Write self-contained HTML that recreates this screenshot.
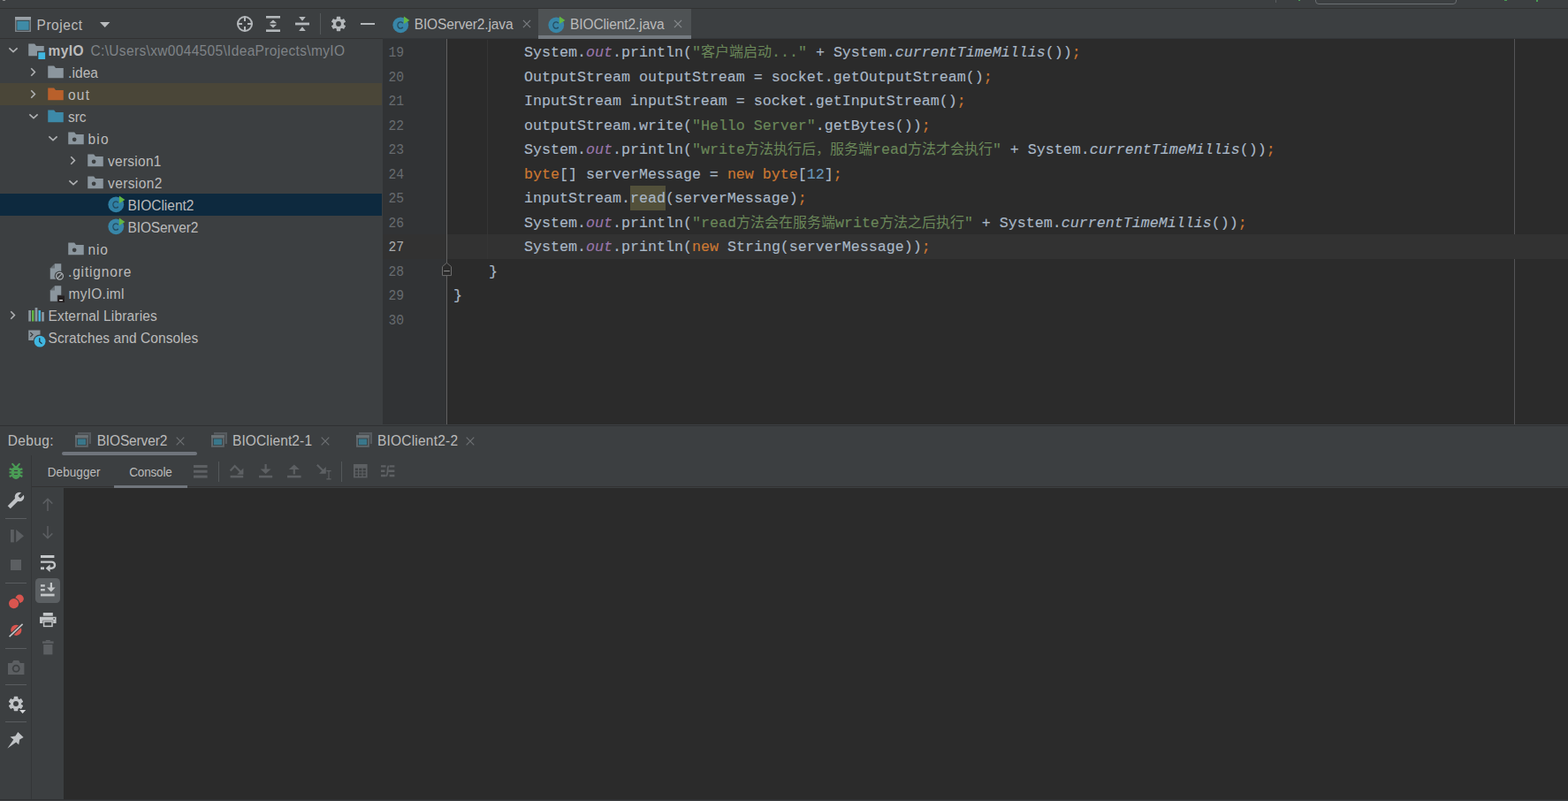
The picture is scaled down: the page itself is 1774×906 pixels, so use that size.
<!DOCTYPE html>
<html lang="en"><head><meta charset="utf-8"><title>IDEA</title><style>
*{box-sizing:border-box;margin:0;padding:0}
html,body{width:1774px;height:906px;overflow:hidden;background:#3c3f41}
body{position:relative;font-family:"Liberation Sans",sans-serif;font-size:15px;color:#bbbbbb}
.a{position:absolute}
.t{position:absolute;white-space:pre;line-height:20px;height:20px;transform:scaleY(1.07)}
.ln{position:absolute;left:432.2px;width:25px;transform:scaleX(0.88);transform-origin:100% 50%;text-align:right;font-family:"Liberation Mono",monospace;font-size:16.667px;color:#676b6f;height:27.5px;line-height:27.5px;white-space:pre}
.cl{position:absolute;left:513px;font-family:"Liberation Mono",monospace;font-size:16.667px;color:#a9b7c6;height:27.5px;line-height:27.5px;white-space:pre;-webkit-text-stroke:0.15px}
.k{color:#cc7832}.s{color:#6a8759}.n{color:#6897bb}.f{color:#9876aa;font-style:italic}.i{font-style:italic}
.cj{display:inline-block;vertical-align:baseline;font-family:"Liberation Mono","Noto Sans CJK SC",monospace;font-size:16px;letter-spacing:0;white-space:nowrap;color:#6a8759;-webkit-text-stroke:0}
svg{position:absolute;overflow:visible}
</style></head><body>
<div class="a" style="left:0px;top:0px;width:1774px;height:10px;background:#3c3f41;"></div>
<div class="a" style="left:0px;top:9px;width:1774px;height:1px;background:#323232;"></div>
<div class="a" style="left:1488px;top:-8px;width:160px;height:12.5px;border:1px solid #6b6f72;border-radius:4px"></div>
<div class="a" style="left:1443px;top:0px;width:1px;height:3px;background:#5a5d5f;"></div>
<div class="a" style="left:1469px;top:0px;width:2px;height:1px;background:#499c54;"></div>
<div class="a" style="left:1702px;top:0px;width:3px;height:1px;background:#499c54;"></div>
<div class="a" style="left:1738px;top:0px;width:2px;height:2px;background:#499c54;"></div>
<div class="a" style="left:3px;top:0px;width:3px;height:1px;background:#8a8a8a;"></div>
<div class="a" style="left:0px;top:10px;width:433px;height:470px;background:#3c3f41;"></div>
<div class="a" style="left:0px;top:43px;width:433px;height:1px;background:#323232;"></div>
<div class="a" style="left:0px;top:94px;width:432px;height:25px;background:#4a4638;"></div>
<div class="a" style="left:0px;top:219px;width:432px;height:25px;background:#0d293e;"></div>
<div class="t" style="left:41.50px;top:18.73px;transform-origin:0 14.57px;font-size:15.5px;color:#bbbbbb;letter-spacing:0.542px;font-weight:normal;">Project</div>
<div class="t" style="left:54.50px;top:48.03px;transform-origin:0 14.57px;font-size:15.5px;color:#bbbbbb;letter-spacing:0.411px;font-weight:bold;">myIO</div>
<div class="t" style="left:77.00px;top:73.03px;transform-origin:0 14.57px;font-size:15.5px;color:#bbbbbb;letter-spacing:0.094px;font-weight:normal;">.idea</div>
<div class="t" style="left:77.00px;top:98.03px;transform-origin:0 14.57px;font-size:15.5px;color:#bbbbbb;letter-spacing:1.219px;font-weight:normal;">out</div>
<div class="t" style="left:77.00px;top:123.03px;transform-origin:0 14.57px;font-size:15.5px;color:#bbbbbb;letter-spacing:-0.036px;font-weight:normal;">src</div>
<div class="t" style="left:99.50px;top:148.03px;transform-origin:0 14.57px;font-size:15.5px;color:#bbbbbb;letter-spacing:1.156px;font-weight:normal;">bio</div>
<div class="t" style="left:122.00px;top:173.03px;transform-origin:0 14.57px;font-size:15.5px;color:#bbbbbb;letter-spacing:0.272px;font-weight:normal;">version1</div>
<div class="t" style="left:122.00px;top:198.03px;transform-origin:0 14.57px;font-size:15.5px;color:#bbbbbb;letter-spacing:0.387px;font-weight:normal;">version2</div>
<div class="t" style="left:144.50px;top:223.03px;transform-origin:0 14.57px;font-size:15.5px;color:#bbbbbb;letter-spacing:0.005px;font-weight:normal;">BIOClient2</div>
<div class="t" style="left:144.50px;top:248.03px;transform-origin:0 14.57px;font-size:15.5px;color:#bbbbbb;letter-spacing:-0.132px;font-weight:normal;">BIOServer2</div>
<div class="t" style="left:99.50px;top:273.03px;transform-origin:0 14.57px;font-size:15.5px;color:#bbbbbb;letter-spacing:0.806px;font-weight:normal;">nio</div>
<div class="t" style="left:77.00px;top:298.03px;transform-origin:0 14.57px;font-size:15.5px;color:#bbbbbb;letter-spacing:0.837px;font-weight:normal;">.gitignore</div>
<div class="t" style="left:77.50px;top:323.03px;transform-origin:0 14.57px;font-size:15.5px;color:#bbbbbb;letter-spacing:0.266px;font-weight:normal;">myIO.iml</div>
<div class="t" style="left:54.50px;top:348.03px;transform-origin:0 14.57px;font-size:15.5px;color:#bbbbbb;letter-spacing:0.158px;font-weight:normal;">External Libraries</div>
<div class="t" style="left:54.50px;top:373.03px;transform-origin:0 14.57px;font-size:15.5px;color:#bbbbbb;letter-spacing:0.085px;font-weight:normal;">Scratches and Consoles</div>
<div class="t" style="left:102.50px;top:48.03px;transform-origin:0 14.57px;font-size:15.5px;color:#7f8387;letter-spacing:0.338px;font-weight:normal;">C:\Users\xw0044505\IdeaProjects\myIO</div>
<svg style="left:5.3px;top:46.5px" width="20" height="20" viewBox="0 0 16 16" ><polyline points="4.3,5.9 8,9.3 11.7,5.9" fill="none" stroke="#afb1b3" stroke-width="1.3"/></svg>
<svg style="left:30.75px;top:46.5px" width="20" height="20" viewBox="0 0 16 16" ><path d="M1,13 H15 V4 H8 L6.5,2 H1 Z" fill="#8b969e"/><rect x="8.8" y="8.6" width="8" height="8" fill="#3c3f41"/><rect x="9.9" y="9.8" width="6.2" height="6.2" fill="#40b6e0"/></svg>
<svg style="left:27.8px;top:71.5px" width="20" height="20" viewBox="0 0 16 16" ><polyline points="5.8,4.2 9.1,7.6 5.8,11" fill="none" stroke="#afb1b3" stroke-width="1.3"/></svg>
<svg style="left:53.25px;top:71.5px" width="20" height="20" viewBox="0 0 16 16" ><path d="M1,13 H15 V4 H8 L6.5,2 H1 Z" fill="#8b969e"/></svg>
<svg style="left:27.8px;top:96.5px" width="20" height="20" viewBox="0 0 16 16" ><polyline points="5.8,4.2 9.1,7.6 5.8,11" fill="none" stroke="#afb1b3" stroke-width="1.3"/></svg>
<svg style="left:53.25px;top:96.5px" width="20" height="20" viewBox="0 0 16 16" ><path d="M1,13 H15 V4 H8 L6.5,2 H1 Z" fill="#b9602b"/></svg>
<svg style="left:27.8px;top:121.5px" width="20" height="20" viewBox="0 0 16 16" ><polyline points="4.3,5.9 8,9.3 11.7,5.9" fill="none" stroke="#afb1b3" stroke-width="1.3"/></svg>
<svg style="left:53.25px;top:121.5px" width="20" height="20" viewBox="0 0 16 16" ><path d="M1,13 H15 V4 H8 L6.5,2 H1 Z" fill="#3d8aa9"/></svg>
<svg style="left:50.3px;top:146.5px" width="20" height="20" viewBox="0 0 16 16" ><polyline points="4.3,5.9 8,9.3 11.7,5.9" fill="none" stroke="#afb1b3" stroke-width="1.3"/></svg>
<svg style="left:75.75px;top:146.5px" width="20" height="20" viewBox="0 0 16 16" ><path d="M1,13 H15 V4 H8 L6.5,2 H1 Z" fill="#8b969e"/><circle cx="6.5" cy="8.6" r="1.9" fill="#3c3f41"/></svg>
<svg style="left:72.8px;top:171.5px" width="20" height="20" viewBox="0 0 16 16" ><polyline points="5.8,4.2 9.1,7.6 5.8,11" fill="none" stroke="#afb1b3" stroke-width="1.3"/></svg>
<svg style="left:98.25px;top:171.5px" width="20" height="20" viewBox="0 0 16 16" ><path d="M1,13 H15 V4 H8 L6.5,2 H1 Z" fill="#8b969e"/><circle cx="6.5" cy="8.6" r="1.9" fill="#3c3f41"/></svg>
<svg style="left:72.8px;top:196.5px" width="20" height="20" viewBox="0 0 16 16" ><polyline points="4.3,5.9 8,9.3 11.7,5.9" fill="none" stroke="#afb1b3" stroke-width="1.3"/></svg>
<svg style="left:98.25px;top:196.5px" width="20" height="20" viewBox="0 0 16 16" ><path d="M1,13 H15 V4 H8 L6.5,2 H1 Z" fill="#8b969e"/><circle cx="6.5" cy="8.6" r="1.9" fill="#3c3f41"/></svg>
<svg style="left:120.75px;top:221.1px" width="20" height="20" viewBox="0 0 16 16" ><circle cx="8.2" cy="8.2" r="7.1" fill="#3080a4"/><path d="M10.2,10.2 A2.6,2.9 0 1 1 10.2,6.6" fill="none" stroke="#1f3d4d" stroke-width="1.1" stroke-opacity=".8"/><path d="M11.1,0.4 L16.3,4 L11.1,7.1 Z" fill="#62b543"/></svg>
<svg style="left:120.75px;top:246.1px" width="20" height="20" viewBox="0 0 16 16" ><circle cx="8.2" cy="8.2" r="7.1" fill="#3886a8"/><path d="M10.2,10.2 A2.6,2.9 0 1 1 10.2,6.6" fill="none" stroke="#1f3d4d" stroke-width="1.1" stroke-opacity=".8"/><path d="M11.1,0.4 L16.3,4 L11.1,7.1 Z" fill="#62b543"/></svg>
<svg style="left:75.75px;top:271.5px" width="20" height="20" viewBox="0 0 16 16" ><path d="M1,13 H15 V4 H8 L6.5,2 H1 Z" fill="#8b969e"/><circle cx="6.5" cy="8.6" r="1.9" fill="#3c3f41"/></svg>
<svg style="left:53.25px;top:296.5px" width="20" height="20" viewBox="0 0 16 16" ><path d="M3,15 V5.2 L7.2,1 H13 V15 Z" fill="#8b969e"/><path d="M3,5.2 L7.2,1 V5.2 Z" fill="#3c3f41" fill-opacity=".45"/><circle cx="11.6" cy="12.2" r="4.6" fill="#3c3f41"/><circle cx="11.6" cy="12.2" r="3.1" fill="none" stroke="#aeb3b7" stroke-width="1"/><line x1="9.5" y1="14.3" x2="13.7" y2="10.1" stroke="#aeb3b7" stroke-width="1"/></svg>
<svg style="left:53.25px;top:321.5px" width="20" height="20" viewBox="0 0 16 16" ><path d="M3,15 V5.2 L7.2,1 H13 V15 Z" fill="#8b969e"/><path d="M3,5.2 L7.2,1 V5.2 Z" fill="#3c3f41" fill-opacity=".45"/><rect x="9.4" y="9.4" width="7" height="7" fill="#3c3f41"/><rect x="10" y="10" width="6" height="6" fill="#231f20"/><rect x="11.3" y="13.6" width="3" height="1" fill="#e8e8e8"/></svg>
<svg style="left:5.3px;top:346.5px" width="20" height="20" viewBox="0 0 16 16" ><polyline points="5.8,4.2 9.1,7.6 5.8,11" fill="none" stroke="#afb1b3" stroke-width="1.3"/></svg>
<svg style="left:30.75px;top:345.5px" width="20" height="20" viewBox="0 0 16 16" ><rect x="1" y="4" width="2.2" height="10" fill="#8b969e"/><rect x="4" y="4" width="2" height="10" fill="#62b543"/><rect x="6.9" y="1.6" width="2.2" height="12.4" fill="#8b969e"/><rect x="10" y="4" width="2" height="10" fill="#40b6e0"/><rect x="12.9" y="5.6" width="2.2" height="8.4" fill="#8b969e"/></svg>
<svg style="left:30.75px;top:371.5px" width="20" height="20" viewBox="0 0 16 16" ><rect x="1" y="1.2" width="10.6" height="9.2" fill="#8b969e"/><polyline points="2.6,3.2 4.8,5.2 2.6,7.2" fill="none" stroke="#3c3f41" stroke-width="1"/><circle cx="11.3" cy="11.3" r="6.1" fill="#3c3f41"/><circle cx="11.3" cy="11.3" r="5.1" fill="#40b6e0"/><polyline points="11,8.2 11,11.6 13.2,13.4" fill="none" stroke="#1f3a4a" stroke-width="1.1"/></svg>
<svg style="left:17px;top:19px" width="18" height="17" viewBox="0 0 18 17" ><rect x="0" y="0" width="18" height="17" fill="#7d858b"/><rect x="0" y="0" width="18" height="3.2" fill="#9aa1a7"/><rect x="1.6" y="4" width="14.8" height="11.6" fill="#33373a"/><rect x="2.3" y="4.7" width="13.4" height="10.2" fill="#3f8ba7"/></svg>
<svg style="left:112.5px;top:25.4px" width="11.4" height="6" viewBox="0 0 11.4 6" ><path d="M0,0 H11.4 L5.7,6 Z" fill="#b9bcbe"/></svg>
<svg style="left:267px;top:17px" width="20" height="20" viewBox="0 0 20 20" ><circle cx="10" cy="10" r="8" fill="none" stroke="#b4b8bb" stroke-width="2"/><path d="M10,1.5 V7 M10,13 V18.5 M1.5,10 H7 M13,10 H18.5" stroke="#b4b8bb" stroke-width="2" fill="none"/></svg>
<svg style="left:301.2px;top:18px" width="16" height="18" viewBox="0 0 16 18" ><rect x="0" y="0" width="16" height="2.6" fill="#b4b8bb"/><rect x="0" y="15.4" width="16" height="2.6" fill="#b4b8bb"/><path d="M8,4.4 L12.2,8.2 H3.8 Z M8,13.6 L12.2,9.8 H3.8 Z" fill="#b4b8bb"/></svg>
<svg style="left:334.3px;top:18px" width="16" height="18" viewBox="0 0 16 18" ><rect x="0" y="7.6" width="16" height="2.8" fill="#b4b8bb"/><path d="M8,5.8 L11.8,1 H4.2 Z M8,12.2 L11.8,17 H4.2 Z" fill="#b4b8bb"/></svg>
<div class="a" style="left:362px;top:15px;width:1px;height:24px;background:#54585a;"></div>
<svg style="left:373px;top:17px" width="20" height="20" viewBox="0 0 20 20" ><g transform="translate(10,10)" fill="#b4b8bb"><rect x="-2.2" y="-8.2" width="4.4" height="8.2" rx="0.6" transform="rotate(0)"/><rect x="-2.2" y="-8.2" width="4.4" height="8.2" rx="0.6" transform="rotate(60)"/><rect x="-2.2" y="-8.2" width="4.4" height="8.2" rx="0.6" transform="rotate(120)"/><rect x="-2.2" y="-8.2" width="4.4" height="8.2" rx="0.6" transform="rotate(180)"/><rect x="-2.2" y="-8.2" width="4.4" height="8.2" rx="0.6" transform="rotate(240)"/><rect x="-2.2" y="-8.2" width="4.4" height="8.2" rx="0.6" transform="rotate(300)"/><circle r="6.1"/></g><circle cx="10" cy="10" r="2.9" fill="#3c3f41"/></svg>
<div class="a" style="left:408.4px;top:25.6px;width:15.2px;height:2.8px;background:#b4b8bb;"></div>
<div class="a" style="left:433px;top:10px;width:1341px;height:34px;background:#3c3f41;"></div>
<div class="a" style="left:433px;top:43px;width:1341px;height:1px;background:#34373a;"></div>
<div class="a" style="left:609px;top:10px;width:173px;height:34px;background:#4e5254;"></div>
<div class="a" style="left:609px;top:40px;width:173px;height:4px;background:#747a80;"></div>
<div class="t" style="left:468.70px;top:18.03px;transform-origin:0 14.57px;font-size:15.5px;color:#bbbbbb;letter-spacing:-0.130px;font-weight:normal;">BIOServer2.java</div>
<div class="t" style="left:644.90px;top:18.03px;transform-origin:0 14.57px;font-size:15.5px;color:#bbbbbb;letter-spacing:-0.072px;font-weight:normal;">BIOClient2.java</div>
<svg style="left:443px;top:17.6px" width="20" height="20" viewBox="0 0 16 16" ><circle cx="8.2" cy="8.2" r="7.1" fill="#3886a8"/><path d="M10.2,10.2 A2.6,2.9 0 1 1 10.2,6.6" fill="none" stroke="#1f3d4d" stroke-width="1.1" stroke-opacity=".8"/><path d="M11.1,0.4 L16.3,4 L11.1,7.1 Z" fill="#62b543"/></svg>
<svg style="left:619.3px;top:17.6px" width="20" height="20" viewBox="0 0 16 16" ><circle cx="8.2" cy="8.2" r="7.1" fill="#3886a8"/><path d="M10.2,10.2 A2.6,2.9 0 1 1 10.2,6.6" fill="none" stroke="#1f3d4d" stroke-width="1.1" stroke-opacity=".8"/><path d="M11.1,0.4 L16.3,4 L11.1,7.1 Z" fill="#62b543"/></svg>
<svg style="left:590px;top:20.9px" width="12" height="12" viewBox="0 0 12 12" ><path d="M1.9000000000000004,1.9000000000000004 L10.1,10.1 M10.1,1.9000000000000004 L1.9000000000000004,10.1" stroke="#7a7d80" stroke-width="1.2" fill="none"/></svg>
<svg style="left:760.8px;top:20.9px" width="12" height="12" viewBox="0 0 12 12" ><path d="M1.9000000000000004,1.9000000000000004 L10.1,10.1 M10.1,1.9000000000000004 L1.9000000000000004,10.1" stroke="#868a8d" stroke-width="1.2" fill="none"/></svg>
<div class="a" style="left:433px;top:44px;width:73px;height:436px;background:#313335;"></div>
<div class="a" style="left:506px;top:44px;width:1268px;height:436px;background:#2b2b2b;"></div>
<div class="a" style="left:1713px;top:44px;width:1px;height:436px;background:#555557;"></div>
<div class="a" style="left:433px;top:265px;width:1341px;height:27.5px;background:#323232;"></div>
<div class="a" style="left:713px;top:210px;width:40px;height:27.5px;background:#52503a;"></div>
<div class="ln" style="top:46.05px;color:#676b6f">19</div>
<div class="cl" style="top:46.05px">        System.<span class="f">out</span>.println(<span class="s">"</span><span class="cj" style="width:80px">客户端启动</span><span class="s">..."</span> + System.<span class="i">currentTimeMillis</span>())<span class="k">;</span></div>
<div class="ln" style="top:73.55px;color:#676b6f">20</div>
<div class="cl" style="top:73.55px">        OutputStream outputStream = socket.getOutputStream()<span class="k">;</span></div>
<div class="ln" style="top:101.05px;color:#676b6f">21</div>
<div class="cl" style="top:101.05px">        InputStream inputStream = socket.getInputStream()<span class="k">;</span></div>
<div class="ln" style="top:128.55px;color:#676b6f">22</div>
<div class="cl" style="top:128.55px">        outputStream.write(<span class="s">"Hello Server"</span>.getBytes())<span class="k">;</span></div>
<div class="ln" style="top:156.05px;color:#676b6f">23</div>
<div class="cl" style="top:156.05px">        System.<span class="f">out</span>.println(<span class="s">"write</span><span class="cj" style="width:144px">方法执行后，服务端</span><span class="s">read</span><span class="cj" style="width:96px">方法才会执行</span><span class="s">"</span> + System.<span class="i">currentTimeMillis</span>())<span class="k">;</span></div>
<div class="ln" style="top:183.55px;color:#676b6f">24</div>
<div class="cl" style="top:183.55px">        <span class="k">byte</span>[] serverMessage = <span class="k">new byte</span>[<span class="n">12</span>]<span class="k">;</span></div>
<div class="ln" style="top:211.05px;color:#676b6f">25</div>
<div class="cl" style="top:211.05px">        inputStream.read(serverMessage)<span class="k">;</span></div>
<div class="ln" style="top:238.55px;color:#676b6f">26</div>
<div class="cl" style="top:238.55px">        System.<span class="f">out</span>.println(<span class="s">"read</span><span class="cj" style="width:112px">方法会在服务端</span><span class="s">write</span><span class="cj" style="width:96px">方法之后执行</span><span class="s">"</span> + System.<span class="i">currentTimeMillis</span>())<span class="k">;</span></div>
<div class="ln" style="top:266.05px;color:#a9abad">27</div>
<div class="cl" style="top:266.05px">        System.<span class="f">out</span>.println(<span class="k">new</span> String(serverMessage))<span class="k">;</span></div>
<div class="ln" style="top:293.55px;color:#676b6f">28</div>
<div class="cl" style="top:293.55px">    }</div>
<div class="ln" style="top:321.05px;color:#676b6f">29</div>
<div class="cl" style="top:321.05px">}</div>
<div class="ln" style="top:348.55px;color:#676b6f">30</div>
<div class="a" style="left:551px;top:45px;width:1px;height:247.5px;background:#353535;"></div>
<div class="a" style="left:505px;top:44px;width:1px;height:436px;background:#606060;"></div>
<svg style="left:499px;top:296px" width="13" height="17" viewBox="0 0 13 17" ><path d="M6.5,1.3 L11.5,5.6 V15.6 H1.5 V5.6 Z" fill="#2b2b2b" stroke="#6e6e6e" stroke-width="1"/><rect x="3.2" y="10" width="6.6" height="1.1" fill="#8a8a8a"/></svg>
<div class="a" style="left:0px;top:480px;width:1774px;height:426px;background:#3c3f41;"></div>
<div class="a" style="left:0px;top:481px;width:1774px;height:1px;background:#2f3133;"></div>
<div class="a" style="left:72px;top:552px;width:1702px;height:352px;background:#2b2b2b;"></div>
<div class="a" style="left:35px;top:515px;width:1px;height:389px;background:#343638;"></div>
<div class="a" style="left:36px;top:550px;width:1738px;height:1px;background:#323232;"></div>
<div class="a" style="left:0px;top:904px;width:1774px;height:1px;background:#2f3133;"></div>
<div class="a" style="left:0px;top:905px;width:1774px;height:1px;background:#3c3f41;"></div>
<div class="t" style="left:8.80px;top:489.23px;transform-origin:0 14.57px;font-size:15.5px;color:#bbbbbb;letter-spacing:0.343px;font-weight:normal;">Debug:</div>
<div class="t" style="left:109.70px;top:489.23px;transform-origin:0 14.57px;font-size:15.5px;color:#bbbbbb;letter-spacing:-0.154px;font-weight:normal;">BIOServer2</div>
<div class="t" style="left:263.00px;top:489.23px;transform-origin:0 14.57px;font-size:15.5px;color:#bbbbbb;letter-spacing:0.115px;font-weight:normal;">BIOClient2-1</div>
<div class="t" style="left:427.00px;top:489.23px;transform-origin:0 14.57px;font-size:15.5px;color:#bbbbbb;letter-spacing:0.206px;font-weight:normal;">BIOClient2-2</div>
<div class="a" style="left:69.6px;top:511.3px;width:153.8px;height:3.8px;background:#70757c;border-radius:2px"></div>
<div class="t" style="left:53.80px;top:524.92px;transform-origin:0 13.88px;font-size:13.5px;color:#bbbbbb;letter-spacing:0.072px;font-weight:normal;">Debugger</div>
<div class="t" style="left:146.30px;top:524.92px;transform-origin:0 13.88px;font-size:13.5px;color:#bbbbbb;letter-spacing:-0.172px;font-weight:normal;">Console</div>
<div class="a" style="left:129px;top:548.8px;width:83px;height:3px;background:#70757c;"></div>
<svg style="left:85.2px;top:488.8px" width="18" height="17" viewBox="0 0 18 17" ><path d="M3,0 H18 V13 H15.6 V2.6 H3 Z" fill="#565b5f"/><rect x="0" y="3.2" width="14.8" height="13.6" fill="#5f6569"/><rect x="0" y="3.2" width="14.8" height="2.6" fill="#6d7377"/><rect x="2" y="6.8" width="10.8" height="8" fill="#33373a"/><rect x="2.7" y="7.4" width="9.4" height="6.8" fill="#39778b"/></svg>
<svg style="left:238.8px;top:488.8px" width="18" height="17" viewBox="0 0 18 17" ><path d="M3,0 H18 V13 H15.6 V2.6 H3 Z" fill="#565b5f"/><rect x="0" y="3.2" width="14.8" height="13.6" fill="#5f6569"/><rect x="0" y="3.2" width="14.8" height="2.6" fill="#6d7377"/><rect x="2" y="6.8" width="10.8" height="8" fill="#33373a"/><rect x="2.7" y="7.4" width="9.4" height="6.8" fill="#39778b"/></svg>
<svg style="left:402.8px;top:488.8px" width="18" height="17" viewBox="0 0 18 17" ><path d="M3,0 H18 V13 H15.6 V2.6 H3 Z" fill="#565b5f"/><rect x="0" y="3.2" width="14.8" height="13.6" fill="#5f6569"/><rect x="0" y="3.2" width="14.8" height="2.6" fill="#6d7377"/><rect x="2" y="6.8" width="10.8" height="8" fill="#33373a"/><rect x="2.7" y="7.4" width="9.4" height="6.8" fill="#39778b"/></svg>
<svg style="left:198px;top:492.9px" width="12" height="12" viewBox="0 0 12 12" ><path d="M1.7000000000000002,1.7000000000000002 L10.3,10.3 M10.3,1.7000000000000002 L1.7000000000000002,10.3" stroke="#6e7174" stroke-width="1.2" fill="none"/></svg>
<svg style="left:362px;top:492.9px" width="12" height="12" viewBox="0 0 12 12" ><path d="M1.7000000000000002,1.7000000000000002 L10.3,10.3 M10.3,1.7000000000000002 L1.7000000000000002,10.3" stroke="#6e7174" stroke-width="1.2" fill="none"/></svg>
<svg style="left:526px;top:492.9px" width="12" height="12" viewBox="0 0 12 12" ><path d="M1.7000000000000002,1.7000000000000002 L10.3,10.3 M10.3,1.7000000000000002 L1.7000000000000002,10.3" stroke="#6e7174" stroke-width="1.2" fill="none"/></svg>
<svg style="left:10px;top:524px" width="16" height="18" viewBox="0 0 16 18" ><path d="M4.2,0.9 L7.6,4.8 M11.8,0.9 L8.4,4.8" stroke="#4a9c55" stroke-width="2.1" stroke-linecap="round" fill="none"/><path d="M0.6,6.3 L4,7.2 H12 L15.4,6.3 M0.5,10.4 H15.5 M0.6,14.8 L4,13.7 H12 L15.4,14.8" stroke="#4a9c55" stroke-width="2.4" fill="none"/><path d="M8,4 C11.6,4 13.2,6.6 13.2,10.6 C13.2,15 11.2,17.9 8,17.9 C4.8,17.9 2.8,15 2.8,10.6 C2.8,6.6 4.4,4 8,4 Z" fill="#4a9c55"/><rect x="6" y="7.9" width="4" height="1.2" fill="#3c3f41"/><rect x="6" y="11.7" width="4" height="1.2" fill="#3c3f41"/></svg>
<svg style="left:9.7px;top:549.9px" width="24" height="24" viewBox="0 0 24 24" ><g transform="translate(12,12) rotate(45)"><circle cx="0" cy="0" r="5.3" fill="#c0c3c6"/><rect x="-2.2" y="2" width="4.4" height="14.6" fill="#c0c3c6"/><rect x="-1.9" y="-6.5" width="3.8" height="6.9" fill="#3c3f41"/></g></svg>
<div class="a" style="left:6px;top:586.2px;width:24px;height:1px;background:#5a5d60;"></div>
<div class="a" style="left:6px;top:659px;width:24px;height:1px;background:#5a5d60;"></div>
<div class="a" style="left:6px;top:733px;width:24px;height:1px;background:#5a5d60;"></div>
<div class="a" style="left:6px;top:774.2px;width:24px;height:1px;background:#5a5d60;"></div>
<div class="a" style="left:6px;top:816.4px;width:24px;height:1px;background:#5a5d60;"></div>
<svg style="left:11.6px;top:599px" width="15" height="14.4" viewBox="0 0 15 14.4" ><rect x="0" y="0" width="3.8" height="14.4" fill="#5c5f62"/><path d="M6.2,0 L15,7.2 L6.2,14.4 Z" fill="#5c5f62"/></svg>
<div class="a" style="left:12px;top:632.8px;width:12.4px;height:12.4px;background:#5c5f62;"></div>
<svg style="left:9px;top:671px" width="20" height="19" viewBox="0 0 20 19" ><circle cx="13.1" cy="6.2" r="4.7" fill="#d9554f"/><circle cx="6.6" cy="11.6" r="6.6" fill="#3c3f41"/><circle cx="6.6" cy="11.6" r="5.6" fill="#d9554f"/></svg>
<svg style="left:9px;top:703px" width="20" height="20" viewBox="0 0 20 20" ><circle cx="9.3" cy="9.8" r="6.1" fill="#d9554f"/><line x1="1.2" y1="17.6" x2="17" y2="2.4" stroke="#3c3f41" stroke-width="4"/><line x1="1.6" y1="17.2" x2="16.6" y2="2.8" stroke="#c4c7c9" stroke-width="1.6"/></svg>
<svg style="left:8.8px;top:746.8px" width="18.4" height="16" viewBox="0 0 18.4 16" ><path d="M0,3 H4.6 L6.2,0 H12.2 L13.8,3 H18.4 V16 H0 Z" fill="#5c5f62"/><circle cx="9.2" cy="9.2" r="4.4" fill="#3c3f41"/><circle cx="9.2" cy="9.2" r="2.6" fill="#5c5f62"/></svg>
<svg style="left:8.100000000000001px;top:785.9px" width="20" height="20" viewBox="0 0 20 20" ><g transform="translate(10,10)" fill="#c0c3c6"><rect x="-2.3" y="-8.2" width="4.6" height="8.2" rx="0.6" transform="rotate(0)"/><rect x="-2.3" y="-8.2" width="4.6" height="8.2" rx="0.6" transform="rotate(60)"/><rect x="-2.3" y="-8.2" width="4.6" height="8.2" rx="0.6" transform="rotate(120)"/><rect x="-2.3" y="-8.2" width="4.6" height="8.2" rx="0.6" transform="rotate(180)"/><rect x="-2.3" y="-8.2" width="4.6" height="8.2" rx="0.6" transform="rotate(240)"/><rect x="-2.3" y="-8.2" width="4.6" height="8.2" rx="0.6" transform="rotate(300)"/><circle r="6.2"/></g><circle cx="10" cy="10" r="3.0" fill="#3c3f41"/></svg>
<svg style="left:21.8px;top:802.9px" width="7.2" height="4" viewBox="0 0 7.2 4" ><path d="M0,0 H7.2 L3.6,4 Z" fill="#d6d8da"/></svg>
<svg style="left:8.4px;top:827.6px" width="19" height="19" viewBox="0 0 19 19" ><path d="M12.3,0.1 L18.6,6 L14.2,8.4 L13.2,14.2 L10.2,11.4 L0.4,18.6 L7.3,8.6 L3.5,5.4 L9.4,4.4 Z" fill="#c0c3c6"/></svg>
<svg style="left:48px;top:563.4px" width="12" height="15" viewBox="0 0 12 15" ><path d="M6,15 V1.4 M0.7,6.6 L6,1.2 L11.3,6.6" fill="none" stroke="#5c5f62" stroke-width="1.5"/></svg>
<svg style="left:48px;top:595.4px" width="12" height="15" viewBox="0 0 12 15" ><path d="M6,0 V13.6 M0.7,8.4 L6,13.8 L11.3,8.4" fill="none" stroke="#5c5f62" stroke-width="1.5"/></svg>
<svg style="left:46.4px;top:628px" width="17" height="18" viewBox="0 0 17 18" ><rect x="0" y="0" width="15.4" height="3" fill="#c3c6c8"/><path d="M0,7.6 H12.4 A3.6,3.6 0 0 1 12.4,14.8 H9.5" fill="none" stroke="#c3c6c8" stroke-width="2.4"/><path d="M10.6,10.6 V19 L5.6,14.8 Z" fill="#c3c6c8"/><rect x="0" y="13.4" width="4" height="2.8" fill="#c3c6c8"/></svg>
<div class="a" style="left:40.2px;top:654.2px;width:27.8px;height:27.6px;background:#5b5f62;border-radius:4.5px"></div>
<svg style="left:46.4px;top:659.2px" width="17" height="16" viewBox="0 0 17 16" ><rect x="0" y="2.2" width="4.8" height="2.4" fill="#c3c6c8"/><rect x="0" y="7" width="4.8" height="2.4" fill="#c3c6c8"/><rect x="0" y="12.6" width="15.6" height="2.8" fill="#c3c6c8"/><rect x="10.8" y="0" width="2.2" height="8" fill="#c3c6c8"/><path d="M7,5.4 H16.6 L11.8,10.6 Z" fill="#c3c6c8"/></svg>
<svg style="left:44.8px;top:693.4px" width="18.6" height="16.4" viewBox="0 0 18.6 16.4" ><rect x="3.8" y="0" width="11" height="3.6" fill="#c3c6c8"/><path d="M0,4.8 H18.6 V12 H15.2 V8.8 H3.4 V12 H0 Z" fill="#c3c6c8"/><rect x="4.6" y="10" width="9.4" height="5.4" fill="none" stroke="#c3c6c8" stroke-width="1.5"/><rect x="15.4" y="6.2" width="1.6" height="1.4" fill="#3c3f41"/></svg>
<svg style="left:47.5px;top:724.2px" width="12.6" height="16.4" viewBox="0 0 12.6 16.4" ><rect x="3.8" y="0" width="5" height="1.6" fill="#5c5f62"/><rect x="0" y="1.4" width="12.6" height="2.4" fill="#5c5f62"/><path d="M1.2,5 H11.4 V16.4 H1.2 Z" fill="#5c5f62"/></svg>
<svg style="left:219.2px;top:526px" width="15.6" height="14.6" viewBox="0 0 15.6 14.6" ><rect x="0" y="0" width="15.6" height="3" fill="#5d6063"/><rect x="0" y="5.8" width="15.6" height="3" fill="#5d6063"/><rect x="0" y="11.6" width="15.6" height="3" fill="#5d6063"/></svg>
<div class="a" style="left:247px;top:521.5px;width:1px;height:23.5px;background:#54585a;"></div>
<div class="a" style="left:386px;top:521.5px;width:1px;height:23.5px;background:#54585a;"></div>
<svg style="left:260px;top:525px" width="16" height="15.4" viewBox="0 0 16 15.4" ><path d="M0.6,7.6 L5.6,2 L13,9.6" fill="none" stroke="#5d6063" stroke-width="2.2"/><path d="M15.4,4.6 V11.8 H8.2 Z" fill="#5d6063"/><rect x="0.6" y="12.8" width="14.6" height="2.6" fill="#5d6063"/></svg>
<svg style="left:293.2px;top:525px" width="15.2" height="15.4" viewBox="0 0 15.2 15.4" ><rect x="6.5" y="0" width="2.2" height="8" fill="#5d6063"/><path d="M1.6,5.4 H13.6 L7.6,11 Z" fill="#5d6063"/><rect x="0" y="12.8" width="15.2" height="2.6" fill="#5d6063"/></svg>
<svg style="left:325px;top:525px" width="15.6" height="15.4" viewBox="0 0 15.6 15.4" ><rect x="6.7" y="3.4" width="2.2" height="8" fill="#5d6063"/><path d="M1.8,6 H13.8 L7.8,0.4 Z" fill="#5d6063"/><rect x="0" y="12.8" width="15.6" height="2.6" fill="#5d6063"/></svg>
<svg style="left:358px;top:525px" width="17.4" height="17.4" viewBox="0 0 17.4 17.4" ><path d="M0.8,0.8 L8.6,8.6" fill="none" stroke="#5d6063" stroke-width="2.2"/><path d="M10.8,3 V10.8 H3 Z" fill="#5d6063"/><path d="M11.4,7.6 H16.6 M14,7.6 V16.8 M11.4,16.8 H16.6" fill="none" stroke="#5d6063" stroke-width="1.2"/></svg>
<svg style="left:399.6px;top:525.4px" width="15.6" height="15.4" viewBox="0 0 15.6 15.4" ><rect x="0" y="0" width="15.6" height="15.4" fill="#5d6063"/><g fill="#3c3f41"><rect x="1.8" y="4.6" width="3.2" height="2.6"/><rect x="6.2" y="4.6" width="3.2" height="2.6"/><rect x="10.6" y="4.6" width="3.2" height="2.6"/><rect x="1.8" y="8.2" width="3.2" height="2.4"/><rect x="6.2" y="8.2" width="3.2" height="2.4"/><rect x="10.6" y="8.2" width="3.2" height="2.4"/><rect x="1.8" y="11.6" width="3.2" height="2.2"/><rect x="6.2" y="11.6" width="3.2" height="2.2"/><rect x="10.6" y="11.6" width="3.2" height="2.2"/></g></svg>
<svg style="left:431.4px;top:526.4px" width="15.4" height="13.4" viewBox="0 0 15.4 13.4" ><path d="M0,1.4 H5.6 M9.6,1.4 H15.4 M0,6.7 H4.4 M8.2,6.7 H15.4 M0,12 H5.6 M9.6,12 H15.4" stroke="#5d6063" stroke-width="2.4" fill="none"/><path d="M8.6,0.6 C6.4,4.6 8.8,8.6 6.2,12.8" stroke="#5d6063" stroke-width="1.8" fill="none"/></svg>
</body></html>
